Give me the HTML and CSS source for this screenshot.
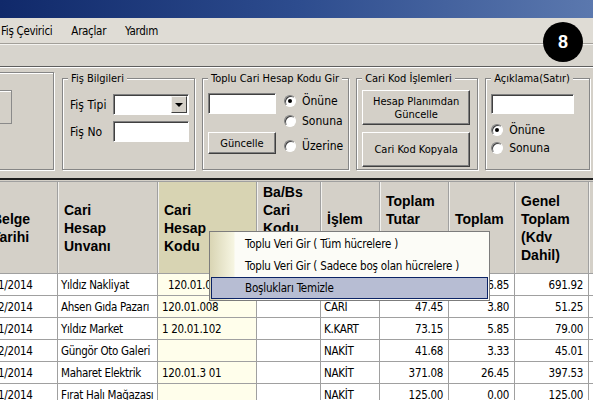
FILE: index.html
```html
<!DOCTYPE html>
<html>
  <head>
    <title>Toplu Cari Hesap Kodu</title>
    <meta charset="utf-8">
    <link rel="stylesheet" href="styles.css">
  </head>
  <body>
    <div class="window">
      <div class="titlebar"></div>

      <div class="menubar">
        <span>Fiş Çevirici</span>
        <span>Araçlar</span>
        <span>Yardım</span>
      </div>

      <div class="toolbar"></div>

      <div class="groups">
        <fieldset class="group group-cut">
          <div class="cut-button"></div>
        </fieldset>

        <fieldset class="group group-fis">
          <legend>Fiş Bilgileri</legend>
          <div class="fis-grid">
            <label>Fiş Tipi</label>
            <div class="combo"><span class="combo-btn"></span></div>
            <label>Fiş No</label>
            <div class="input"></div>
          </div>
        </fieldset>

        <fieldset class="group group-toplu">
          <legend>Toplu Cari Hesap Kodu Gir</legend>
          <div class="toplu-body">
            <div class="toplu-left">
              <div class="input"></div>
              <div class="button btn-guncelle">Güncelle</div>
            </div>
            <div class="toplu-radios">
              <div class="radio-row"><span class="radio checked"></span>Önüne</div>
              <div class="radio-row"><span class="radio"></span>Sonuna</div>
              <div class="radio-row last"><span class="radio"></span>Üzerine</div>
            </div>
          </div>
        </fieldset>

        <fieldset class="group group-cari">
          <legend>Cari Kod İşlemleri</legend>
          <div class="button btn-big">Hesap Planımdan<br>Güncelle</div>
          <div class="button btn-big">Cari Kod Kopyala</div>
        </fieldset>

        <fieldset class="group group-aciklama">
          <legend>Açıklama(Satır)</legend>
          <div class="input input-aciklama"></div>
          <div class="aciklama-radios">
            <div class="radio-row"><span class="radio checked"></span>Önüne</div>
            <div class="radio-row"><span class="radio"></span>Sonuna</div>
          </div>
        </fieldset>
      </div>

      <div class="grid-wrap">
        <table class="grid">
          <colgroup>
            <col style="width: 87px">
            <col style="width: 100px">
            <col style="width: 99px">
            <col style="width: 64px">
            <col style="width: 59px">
            <col style="width: 69px">
            <col style="width: 66px">
            <col style="width: 74px">
            <col style="width: 40px">
          </colgroup>
          <tr class="head">
            <th class="first">Belge<br>Tarihi</th>
            <th>Cari<br>Hesap<br>Unvanı</th>
            <th class="kod">Cari<br>Hesap<br>Kodu</th>
            <th>Ba/Bs<br>Cari<br>Kodu<br>Eşleş-<br>tirme</th>
            <th>İşlem<br>Türü</th>
            <th>Toplam<br>Tutar<br>(Kdv<br>Hariç)</th>
            <th>Toplam<br>Kdv</th>
            <th>Genel<br>Toplam<br>(Kdv<br>Dahil)</th>
            <th></th>
          </tr>
          <tr>
            <td class="date">01/01/2014</td><td>Yıldız Nakliyat</td><td class="kod">&nbsp;&nbsp;120.01.001</td><td></td>
            <td>NAKİT</td><td class="num">645.07</td><td class="num">46.85</td><td class="num">691.92</td><td></td>
          </tr>
          <tr>
            <td class="date">02/02/2014</td><td>Ahsen Gıda Pazarı</td><td class="kod">120.01.008</td><td></td>
            <td>CARİ</td><td class="num">47.45</td><td class="num">3.80</td><td class="num">51.25</td><td></td>
          </tr>
          <tr>
            <td class="date">03/01/2014</td><td>Yıldız Market</td><td class="kod">1 20.01.102</td><td></td>
            <td>K.KART</td><td class="num">73.15</td><td class="num">5.85</td><td class="num">79.00</td><td></td>
          </tr>
          <tr>
            <td class="date">04/02/2014</td><td>Güngör Oto Galeri</td><td class="kod"></td><td></td>
            <td>NAKİT</td><td class="num">41.68</td><td class="num">3.33</td><td class="num">45.01</td><td></td>
          </tr>
          <tr>
            <td class="date">05/01/2014</td><td>Maharet Elektrik</td><td class="kod">120.01.3 01</td><td></td>
            <td>NAKİT</td><td class="num">371.08</td><td class="num">26.45</td><td class="num">397.53</td><td></td>
          </tr>
          <tr>
            <td class="date">06/01/2014</td><td>Fırat Halı Mağazası</td><td class="kod"></td><td></td>
            <td>NAKİT</td><td class="num">125.00</td><td class="num">0.00</td><td class="num">125.00</td><td></td>
          </tr>
        </table>
      </div>

      <!-- step marker over the toolbar -->
      <div class="badge">8</div>

      <!-- right-click menu on the Cari Hesap Kodu column -->
      <div class="context-menu">
        <div class="menu-item">Toplu Veri Gir ( Tüm hücrelere )</div>
        <div class="menu-item">Toplu Veri Gir ( Sadece boş olan hücrelere )</div>
        <div class="menu-item active">Boşlukları Temizle</div>
      </div>
    </div>
  </body>
</html>
```

FILE: styles.css
```css
* {
  box-sizing: border-box;
}
html, body {
  margin: 0;
  height: 100%;
}
body {
  background: #d4d0c8;
  color: #000;
  font-family: "DejaVu Sans Condensed", "DejaVu Sans", sans-serif;
  font-size: 11px;
  overflow: hidden;
}
.window {
  position: relative;
  width: 593px;
  height: 400px;
  overflow: hidden;
}

/* -- window chrome -- */
.titlebar {
  height: 18px;
  background: linear-gradient(to right, #10296a, #2d4c8e 50%, #5b78ae);
}
.menubar {
  display: flex;
  align-items: center;
  gap: 19px;
  height: 26px;
  padding-left: 1px;
  background: #dfdcd5;
  border-bottom: 1px solid #a29f99;
  font-size: 11.5px;
  letter-spacing: -0.3px;
}
.toolbar {
  height: 23px;
  background: #d7d4cd;
  border-top: 1px solid #f4f3f0;
  border-bottom: 1px solid #5e5e5e;
}

/* -- group boxes -- */
.groups {
  display: flex;
  align-items: flex-start;
  gap: 7px;
  height: 111px;
  padding-top: 4px;
  border-top: 1px solid #fff;
}
.group {
  margin: 0;
  height: 98px;
  padding: 0 5px;
  border: 1px solid #868686;
  box-shadow: inset 1px 1px 0 #fff, 1px 1px 0 #fff;
}
.group legend {
  padding: 0 3px;
  line-height: 13px;
  background: #d4d0c8;
}
.group-cut {
  width: 100px;
  margin-left: -46px;
  margin-right: 1px;
  padding-top: 17px;
}
.group-fis { width: 132px; }
.group-toplu { width: 147px; }
.group-cari { width: 122px; }
.group-aciklama { width: 105px; }

.cut-button {
  width: 60px;
  height: 34px;
  margin-left: -8px;
  border: 1px solid #8a8a8a;
  box-shadow: inset 1px 1px 0 #fff;
}

.input, .combo {
  position: relative;
  height: 21px;
  background: #fff;
  border-top: 1px solid #808080;
  border-left: 1px solid #808080;
  border-right: 1px solid #fff;
  border-bottom: 1px solid #fff;
  box-shadow: inset 1px 1px 0 #404040;
}
.combo-btn {
  position: absolute;
  top: 1px;
  right: 1px;
  bottom: 1px;
  width: 16px;
  background: #d4d0c8;
  border: 1px solid;
  border-color: #f4f3f0 #404040 #404040 #f4f3f0;
}
.combo-btn:after {
  content: "";
  position: absolute;
  left: 3px;
  top: 6px;
  border-left: 4px solid transparent;
  border-right: 4px solid transparent;
  border-top: 4px solid #000;
}

.fis-grid {
  display: grid;
  grid-template-columns: 45px 76px;
  row-gap: 6px;
  align-items: center;
  margin-top: 9px;
}
.fis-grid label {
  padding-left: 2px;
  font-size: 12px;
}

.button {
  display: flex;
  align-items: center;
  justify-content: center;
  text-align: center;
  background: #d4d0c8;
  border: 1px solid;
  border-color: #fff #404040 #404040 #fff;
  box-shadow: inset -1px -1px 0 #808080;
  line-height: 13px;
}

.toplu-body {
  display: flex;
  gap: 8px;
}
.toplu-left {
  width: 68px;
  padding-top: 8px;
}
.btn-guncelle {
  height: 22px;
  margin-top: 18px;
}
.toplu-radios {
  padding-top: 6px;
}

.radio-row {
  display: flex;
  align-items: center;
  gap: 6px;
  height: 20px;
  font-size: 12px;
}
.toplu-radios .radio-row.last {
  margin-top: 5px;
}
.radio {
  position: relative;
  width: 12px;
  height: 12px;
  border-radius: 50%;
  background: #fff;
  border: 1px solid;
  border-color: #808080 #fff #fff #808080;
  box-shadow: inset 1px 1px 0 #404040;
}
.radio.checked:after {
  content: "";
  position: absolute;
  left: 3px;
  top: 3px;
  width: 4px;
  height: 4px;
  border-radius: 50%;
  background: #000;
}

.btn-big {
  width: 108px;
  height: 35px;
  margin-top: 7px;
}
.group-cari legend + .btn-big {
  margin-top: 5px;
}

.input-aciklama {
  width: 83px;
  height: 20px;
  margin-top: 9px;
}
.aciklama-radios {
  margin-top: 7px;
}
.aciklama-radios .radio-row {
  height: 18px;
}

/* -- data grid -- */
.grid-wrap {
  border-top: 2px solid #1e1e1e;
  padding-top: 1px;
}
.grid {
  table-layout: fixed;
  border-collapse: collapse;
  width: 658px;
  margin-left: -30px;
}
.grid th, .grid td {
  border: 1px solid #a0a0a0;
  overflow: hidden;
  white-space: nowrap;
}
.grid tr.head {
  height: 92px;
}
.grid th {
  padding: 0 0 0 6px;
  text-align: left;
  vertical-align: middle;
  background: #d4d0c8;
  box-shadow: inset 1px 0 0 #f2f1ee;
  font-family: "Liberation Sans", Arial, sans-serif;
  font-size: 14px;
  line-height: 18px;
  font-weight: bold;
}
.grid th.first {
  padding-left: 21px;
}
.grid th.kod {
  background: #d8d4b3;
}
.grid td {
  height: 22px;
  padding: 0 3px;
  background: #fff;
  font-size: 11.5px;
  letter-spacing: -0.3px;
}
.grid td.date {
  padding-left: 5px;
}
.grid td.kod {
  padding-left: 4px;
  background: #fffeeb;
}
.grid td.num {
  text-align: right;
  padding-right: 5px;
}

/* -- overlays -- */
.badge {
  position: absolute;
  left: 543px;
  top: 22px;
  width: 40px;
  height: 40px;
  border-radius: 50%;
  background: #000;
  color: #fff;
  display: flex;
  align-items: center;
  justify-content: center;
  font-family: "Liberation Sans", Arial, sans-serif;
  font-weight: bold;
  font-size: 18px;
}
.context-menu {
  position: absolute;
  left: 209px;
  top: 231px;
  width: 281px;
  padding: 1px;
  border: 1px solid #7c7c7c;
  background: linear-gradient(to right, #d9d5b4, #f6f5e2 24px, #fcfcf7 25px);
  font-size: 11.5px;
  letter-spacing: -0.2px;
}
.menu-item {
  height: 22px;
  line-height: 20px;
  padding-left: 33px;
  border: 1px solid transparent;
}
.menu-item.active {
  background: #b7bdd3;
  border-color: #0c2466;
}
```
